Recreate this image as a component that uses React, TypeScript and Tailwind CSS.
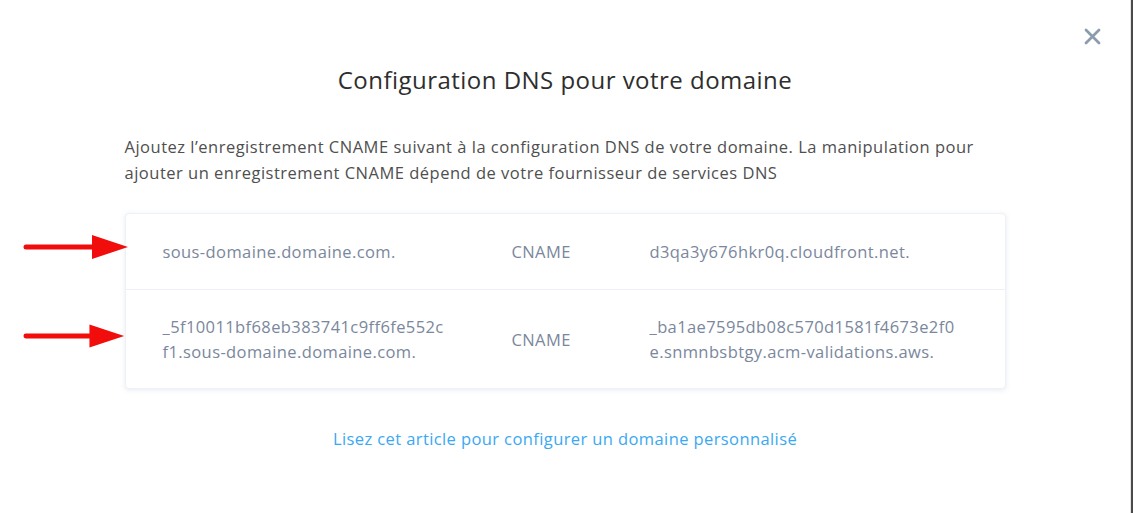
import React from "react";

const rows = [
  {
    name: ["sous-domaine.domaine.com."],
    type: "CNAME",
    value: ["d3qa3y676hkr0q.cloudfront.net."],
  },
  {
    name: ["_5f10011bf68eb383741c9ff6fe552c", "f1.sous-domaine.domaine.com."],
    type: "CNAME",
    value: ["_ba1ae7595db08c570d1581f4673e2f0", "e.snmnbsbtgy.acm-validations.aws."],
  },
];

function Arrow({ className }: { className: string }) {
  return (
    <svg className={className} width="110" height="28" viewBox="0 0 110 28">
      <line x1="4" y1="14" x2="74" y2="14" stroke="#f20d0d" strokeWidth="5" strokeLinecap="round" />
      <polygon points="70,2 106,14 70,26" fill="#f20d0d" />
    </svg>
  );
}

export default function App() {
  return (
    <div
      className="relative flex h-[513px] w-[1133px] overflow-hidden bg-white"
      style={{ fontFamily: "'Open Sans', 'Noto Sans', sans-serif" }}
    >
      <div className="relative flex-1">
        <button className="absolute right-[28px] top-[26px] flex h-[20px] w-[20px] items-center justify-center text-[#8c9cad]">
          <svg width="17" height="17" viewBox="0 0 17 17">
            <path d="M2 2 L15 15 M15 2 L2 15" stroke="currentColor" strokeWidth="2.8" strokeLinecap="round" />
          </svg>
        </button>

        <div className="mx-auto flex w-[881px] flex-col pt-[64px] tracking-[0.4px]">
          <h2 className="text-center text-[24px] leading-[32px] tracking-[0.47px] text-[#2e2e2e]">
            Configuration DNS pour votre domaine
          </h2>
          <p className="mt-[38px] text-[16.5px] leading-[26px] tracking-[0.5px] text-[#4f4f4f]">
            Ajoutez l’enregistrement CNAME suivant à la configuration DNS de votre domaine. La manipulation pour
            ajouter un enregistrement CNAME dépend de votre fournisseur de services DNS
          </p>

          <div className="mt-[27px] rounded-[4px] border border-[#eef1f5] bg-white shadow-[0_1px_5px_rgba(120,140,170,0.18)]">
            {rows.map((r, i) => (
              <div
                key={i}
                className={`grid grid-cols-[349px_138px_1fr] items-center pl-[37px] text-[16.5px] leading-[25px] text-[#7a879c] ${
                  i === 0 ? "py-[25px]" : "border-t border-[#edf0f4] py-[24px]"
                }`}
              >
                <div>
                  {r.name.map((l) => (
                    <div key={l}>{l}</div>
                  ))}
                </div>
                <div>{r.type}</div>
                <div>
                  {r.value.map((l) => (
                    <div key={l}>{l}</div>
                  ))}
                </div>
              </div>
            ))}
          </div>

          <div className="mt-[37px] text-center text-[16.5px] leading-[26px]">
            <a className="cursor-pointer text-[#3aa8f2]">Lisez cet article pour configurer un domaine personnalisé</a>
          </div>
        </div>

        <Arrow className="absolute left-[22px] top-[233px]" />
        <Arrow className="absolute left-[22px] top-[322px] w-[106px]" />
      </div>
      <div className="w-[1px] bg-[#e6e6e6]" />
      <div className="w-[2px] bg-[#4a4a4a]" />
    </div>
  );
}
